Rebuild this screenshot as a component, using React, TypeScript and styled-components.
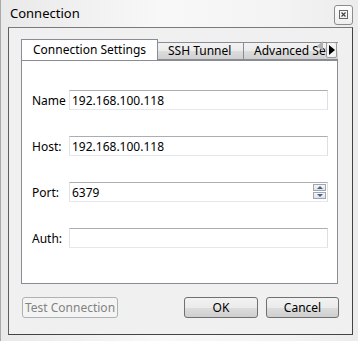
import React, {useState} from 'react';
import styled, {createGlobalStyle} from 'styled-components';

const Global = createGlobalStyle`
  html, body {
    margin: 0;
    padding: 0;
    background: #f0f0f0;
  }
  body {
    font-family: "Noto Sans", "Liberation Sans", sans-serif;
    font-size: 12px;
    color: #000;
  }
`;

const Window = styled.div`
  width: 358px;
  height: 341px;
  box-sizing: border-box;
  display: flex;
  flex-direction: column;
  border-left: 1px solid #a9a9a9;
  background: linear-gradient(to right, #e9e9e9, #f8f8f8 45%, #f3f3f3 80%, #ececec);
`;

const TitleBar = styled.div`
  height: 27px;
  display: flex;
  align-items: center;
  padding: 0 5px 0 9px;
  >.title{
    font-size: 13px;
    flex: 1;
    margin-top: -1px;
  }
`;

const CloseBox = styled.div`
  width: 17px;
  height: 18px;
  margin-top: 2px;
  border: 1px solid #8c8c8c;
  border-radius: 3px;
  background: linear-gradient(#fdfdfd, #eeeeee);
  display: flex;
  align-items: center;
  justify-content: center;
`;

const Client = styled.div`
  flex: 1;
  margin: 0 5px 6px 7px;
  border: 1px solid;
  border-color: #7a7a7a #444 #444 #5e5e5e;
  background: #f0f0f0;
  display: flex;
  flex-direction: column;
  padding: 11px 14px 15px 12px;
`;

const Tabs = styled.div`
  display: flex;
  flex-direction: column;
  height: 245px;
`;

const TabBar = styled.div`
  position: relative;
  height: 21px;
  display: flex;
  align-items: flex-end;
  overflow: hidden;
`;

const Tab = styled.div<{ $active?: boolean; $w: number }>`
  flex: none;
  box-sizing: border-box;
  width: ${p => p.$w}px;
  height: ${p => p.$active ? 22 : 18}px;
  margin-bottom: ${p => p.$active ? -1 : 0}px;
  margin-right: -1px;
  border: 1px solid #898c95;
  border-bottom: ${p => p.$active ? 'none' : '1px solid #898c95'};
  background: ${p => p.$active ? '#fff' : 'linear-gradient(#f3f3f3, #ebebeb 50%, #dddddd 51%, #cfcfcf)'};
  position: relative;
  z-index: ${p => p.$active ? 2 : 1};
  padding: ${p => p.$active ? '2px 0 0 11px' : '0 0 0 10px'};
  line-height: 16px;
  white-space: nowrap;
  overflow: hidden;
`;

const ScrollLeft = styled.div`
  position: absolute;
  right: 14px;
  top: 1px;
  width: 8px;
  height: 11px;
  z-index: 3;
  display: flex;
  align-items: center;
  justify-content: center;
  &::after{
    content: '';
    border-top: 5px solid transparent;
    border-bottom: 5px solid transparent;
    border-right: 6px solid #b0b0b0;
  }
`;

const ScrollRight = styled.div`
  position: absolute;
  right: 1px;
  top: 3px;
  width: 11px;
  height: 16px;
  box-sizing: border-box;
  border: 1px solid #9a9a9a;
  border-radius: 2px;
  background: #f4f4f4;
  z-index: 3;
  display: flex;
  align-items: center;
  justify-content: center;
  &::after{
    content: '';
    border-top: 5px solid transparent;
    border-bottom: 5px solid transparent;
    border-left: 6px solid #000;
    margin-left: 1px;
  }
`;

const Pane = styled.div`
  flex: 1;
  border: 1px solid #898c95;
  background: #fff;
  position: relative;
  z-index: 1;
  padding: 29px 9px 0 10px;
  display: flex;
  flex-direction: column;
  gap: 26px;
`;

const Row = styled.div`
  display: flex;
  align-items: center;
  height: 20px;
  >label{
    width: 37px;
    flex: none;
  }
`;

const Field = styled.div`
  flex: 1;
  height: 20px;
  box-sizing: border-box;
  border: 1px solid;
  border-color: #abadb3 #dbdfe6 #e3e9ef #e2e3ea;
  position: relative;
  display: flex;
  align-items: center;
  padding-left: 2px;
`;

const Spin = styled.div`
  position: absolute;
  right: 1px;
  top: 1px;
  display: flex;
  flex-direction: column;
  gap: 1px;
`;

const SpinButton = styled.div<{ $down?: boolean }>`
  width: 13px;
  height: 7px;
  box-sizing: border-box;
  border: 1px solid #a5a5a5;
  background: linear-gradient(#f7f7f7, #e2e2e2);
  display: flex;
  align-items: center;
  justify-content: center;
  &::after{
    content: '';
    border-left: 3px solid transparent;
    border-right: 3px solid transparent;
    ${p => p.$down ? 'border-top: 3px solid #3d5fa8;' : 'border-bottom: 3px solid #3d5fa8;'}
  }
`;

const Buttons = styled.div`
  display: flex;
  align-items: center;
  margin: 13px -1px 0 0;
  padding-left: 1px;
  gap: 8px;
  >.spacer{
    flex: 1;
  }
`;

const Button = styled.button<{ $w: number }>`
  width: ${p => p.$w}px;
  height: 21px;
  box-sizing: border-box;
  border: 1px solid #707070;
  border-radius: 3px;
  background: linear-gradient(#f2f2f2, #ebebeb 50%, #dddddd 51%, #cfcfcf);
  font-family: "Noto Sans", "Liberation Sans", sans-serif;
  font-size: 12px;
  color: #000;
  padding: 0;
  &:disabled{
    border-color: #adb2b5;
    background: #f4f4f4;
    color: #838383;
  }
`;

function App() {
  const [name, setName] = useState('192.168.100.118');
  const tabs = [
    {label: 'Connection Settings', w: 137},
    {label: 'SSH Tunnel', w: 87},
    {label: 'Advanced Setti', w: 96},
  ];
  return (
    <Window>
      <Global/>
      <TitleBar>
        <span className="title">Connection</span>
        <CloseBox>
          <svg width="9" height="9" viewBox="0 0 9 9">
            <rect x="0.5" y="0.5" width="8" height="8" fill="none" stroke="#666"/>
            <path d="M2.5 2.5 L6.5 6.5 M6.5 2.5 L2.5 6.5" stroke="#444" strokeWidth="1.2"/>
          </svg>
        </CloseBox>
      </TitleBar>
      <Client>
        <Tabs>
          <TabBar>
            {tabs.map((t, i) => <Tab key={t.label} $active={i === 0} $w={t.w}>{t.label}</Tab>)}
            <ScrollLeft/>
            <ScrollRight/>
          </TabBar>
          <Pane>
            <Row>
              <label>Name</label>
              <Field onClick={() => setName(name)}>{name}</Field>
            </Row>
            <Row>
              <label>Host:</label>
              <Field>192.168.100.118</Field>
            </Row>
            <Row>
              <label>Port:</label>
              <Field>
                6379
                <Spin>
                  <SpinButton/>
                  <SpinButton $down/>
                </Spin>
              </Field>
            </Row>
            <Row>
              <label>Auth:</label>
              <Field/>
            </Row>
          </Pane>
        </Tabs>
        <Buttons>
          <Button $w={96} disabled>Test Connection</Button>
          <div className="spacer"/>
          <Button $w={74}>OK</Button>
          <Button $w={73}>Cancel</Button>
        </Buttons>
      </Client>
    </Window>
  );
}

export default App;
